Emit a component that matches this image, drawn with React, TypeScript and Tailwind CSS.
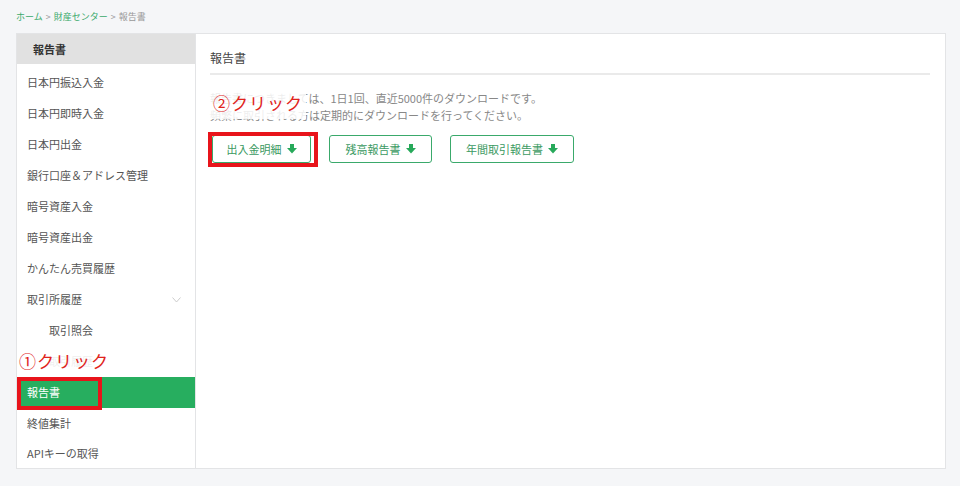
import { ReactNode } from "react";

const font = { fontFamily: '"Noto Sans CJK JP", "Noto Sans", sans-serif' };

function DownArrow() {
  return (
    <svg width="10" height="10" viewBox="0 0 10 10" className="inline-block">
      <rect x="3" y="0" width="4" height="4" fill="#27a95a" />
      <polygon points="0,4 10,4 5,9.5" fill="#27a95a" />
    </svg>
  );
}

function Btn({ children, w }: { children: ReactNode; w: string }) {
  return (
    <button
      className={`h-[28px] ${w} flex items-center justify-center gap-[5px] rounded-[3px] border border-[#3aa96b] bg-white text-[11px] text-[#3b9a62]`}
    >
      {children}
      <DownArrow />
    </button>
  );
}

const menu = [
  "日本円振込入金",
  "日本円即時入金",
  "日本円出金",
  "銀行口座＆アドレス管理",
  "暗号資産入金",
  "暗号資産出金",
  "かんたん売買履歴",
];

function App() {
  return (
    <div className="min-h-[486px] w-[960px] bg-[#f5f6f8] pl-4 pt-[9px]" style={font}>
      {/* breadcrumb */}
      <div className="flex h-[16px] items-center gap-[3px] text-[9px] text-[#999]">
        <span className="text-[#3aa96b]">ホーム</span>
        <span>&gt;</span>
        <span className="text-[#3aa96b]">財産センター</span>
        <span>&gt;</span>
        <span>報告書</span>
      </div>

      <div className="mt-[8px] flex w-[930px] border border-[#e3e4e6] bg-white">
        {/* sidebar */}
        <div className="relative w-[179px] border-r border-[#e3e4e6]">
          <div className="flex h-[30px] items-center bg-[#e1e1e1] pl-[16px] text-[11px] font-bold text-[#333]">
            報告書
          </div>
          <div className="pt-[3px] text-[11px] text-[#555]">
            {menu.map((m) => (
              <div key={m} className="flex h-[31px] items-center pl-[10px]">
                {m}
              </div>
            ))}
            <div className="flex h-[31px] items-center justify-between pl-[10px] pr-[14px]">
              <span>取引所履歴</span>
              <svg width="9" height="6" viewBox="0 0 9 6">
                <polyline points="0.5,0.5 4.5,5 8.5,0.5" fill="none" stroke="#ccc" strokeWidth="1" />
              </svg>
            </div>
            <div className="flex h-[31px] items-center pl-[32px]">取引照会</div>
            <div className="relative flex h-[31px] items-center pl-[32px]">
              取引履歴
              <div className="absolute left-0 top-[1px] flex h-[28px] w-[101px] items-center bg-white/90 pl-[2px] text-[17px] tracking-[1px] text-[#e0231b]">
                ①クリック
              </div>
            </div>
            <div className="relative flex h-[31px] items-center bg-[#27ae5f] pl-[10px] text-white">
              報告書
              <div className="absolute left-0 top-0 h-[33px] w-[85px] border-[4px] border-[#e8141b]" />
            </div>
            <div className="flex h-[31px] items-center pl-[10px]">終値集計</div>
            <div className="flex h-[29px] items-center pl-[10px]">APIキーの取得</div>
          </div>
        </div>

        {/* main */}
        <div className="flex-1 px-[14px] pt-[15px]">
          <div className="pb-[6px] text-[12px] text-[#444]">報告書</div>
          <div className="h-[2px] w-[720px] bg-[#eaeaea]" />
          <div className="relative mt-[15px] text-[11px] leading-[17px] text-[#888]">
            <div>報告書につきましては、1日1回、直近5000件のダウンロードです。</div>
            <div>頻繁に取引される方は定期的にダウンロードを行ってください。</div>
            <div className="absolute left-0 top-[-5px] flex h-[34px] w-[96px] items-center bg-white/85 pl-[3px] text-[17px] tracking-[1px] text-[#e0231b]">
              ②クリック
            </div>
          </div>
          <div className="mt-[11px] flex gap-[18px] pl-[2px]">
            <div className="relative">
              <Btn w="w-[99px]">出入金明細</Btn>
              <div className="absolute left-[-4px] top-[-3px] h-[35px] w-[110px] border-[4px] border-[#e8141b]" />
            </div>
            <Btn w="w-[103px]">残高報告書</Btn>
            <Btn w="w-[124px]">年間取引報告書</Btn>
          </div>
        </div>
      </div>
    </div>
  );
}

export default App;
